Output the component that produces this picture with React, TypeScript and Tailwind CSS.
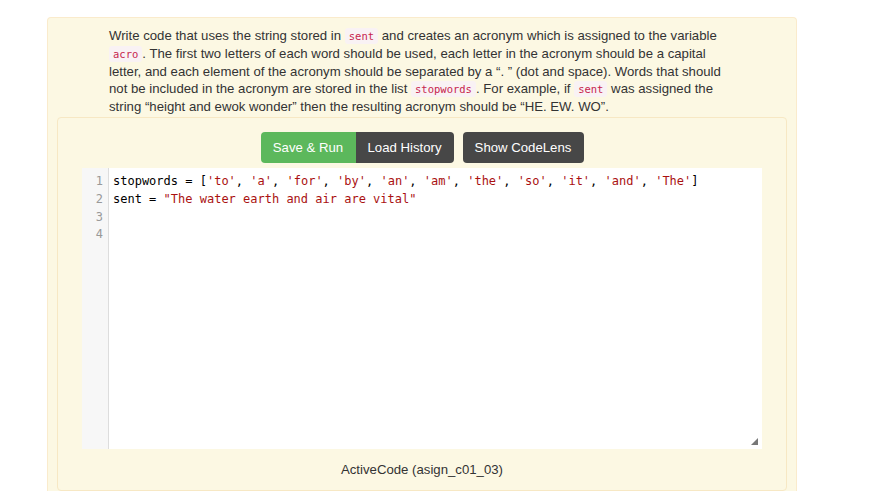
import React from 'react';

const stopwords = ['to', 'a', 'for', 'by', 'an', 'am', 'the', 'so', 'it', 'and', 'The'];

function Code({ children }: { children: React.ReactNode }) {
  return (
    <code className="rounded-[3px] bg-[#f9f2f4] px-[4px] py-[2px] font-['DejaVu_Sans_Mono',monospace] text-[10.5px] leading-none text-[#c7254e]">
      {children}
    </code>
  );
}

function Str({ children }: { children: React.ReactNode }) {
  return <span className="text-[#a11]">{children}</span>;
}

export default function App() {
  const lines = [
    <>
      stopwords = [
      {stopwords.map((w, i) => (
        <React.Fragment key={w + i}>
          <Str>'{w}'</Str>
          {i < stopwords.length - 1 ? ', ' : ''}
        </React.Fragment>
      ))}
      ]
    </>,
    <>
      sent = <Str>"The water earth and air are vital"</Str>
    </>,
    <>&nbsp;</>,
    <>&nbsp;</>,
  ];

  return (
    <div className="min-h-[492px] bg-white pt-[17px] font-['Liberation_Sans',Arial,sans-serif] text-[#333]">
      <div className="ml-[47px] w-[750px] rounded-t-[4px] border border-b-0 border-[#faebcc] bg-[#fcf8e3] px-[9px] pt-[9px]">
        {/* Question text */}
        <p className="mx-auto w-[626px] text-[13.2px] leading-[17.8px]">
          Write code that uses the string stored in <Code>sent</Code> and creates an acronym which is assigned to the variable{' '}
          <Code>acro</Code>. The first two letters of each word should be used, each letter in the acronym should be a capital
          letter, and each element of the acronym should be separated by a “. ” (dot and space). Words that should not be included
          in the acronym are stored in the list <Code>stopwords</Code>. For example, if <Code>sent</Code> was assigned the string
          “height and ewok wonder” then the resulting acronym should be “HE. EW. WO”.
        </p>

        {/* ActiveCode block */}
        <div className="mt-[1px] rounded-[4px] border border-[#f7e8c4] bg-[#fcf8e3] pt-[14px]">
          <div className="flex justify-center">
            <button className="h-[31px] w-[95px] rounded-l-[4px] bg-[#5cb85c] text-[13.2px] text-white">Save &amp; Run</button>
            <button className="h-[31px] w-[98px] rounded-r-[4px] bg-[#474747] text-[13.2px] text-white">Load History</button>
            <button className="ml-[9px] h-[31px] w-[121px] rounded-[4px] bg-[#474747] text-[13.2px] text-white">Show CodeLens</button>
          </div>

          <div className="relative mx-auto mt-[5px] flex h-[281px] w-[680px] bg-white">
            <div className="w-[27px] shrink-0 border-r border-[#ddd] bg-[#f7f7f7] pt-[5px] pr-[5px] text-right font-['DejaVu_Sans_Mono',monospace] text-[12px] leading-[17.8px] text-[#999]">
              {lines.map((_, i) => (
                <div key={i}>{i + 1}</div>
              ))}
            </div>
            <div className="pt-[5px] pl-[4px] font-['DejaVu_Sans_Mono',monospace] text-[12px] leading-[17.8px] whitespace-pre text-black">
              {lines.map((l, i) => (
                <div key={i}>{l}</div>
              ))}
            </div>
            <svg className="absolute right-[4px] bottom-[4px]" width="7" height="7" viewBox="0 0 7 7">
              <polygon points="7,0 7,7 0,7" fill="#777" />
            </svg>
          </div>

          <div className="pt-[11px] pb-[10px] text-center text-[13.2px] leading-[20px]">ActiveCode (asign_c01_03)</div>
        </div>
      </div>
    </div>
  );
}
